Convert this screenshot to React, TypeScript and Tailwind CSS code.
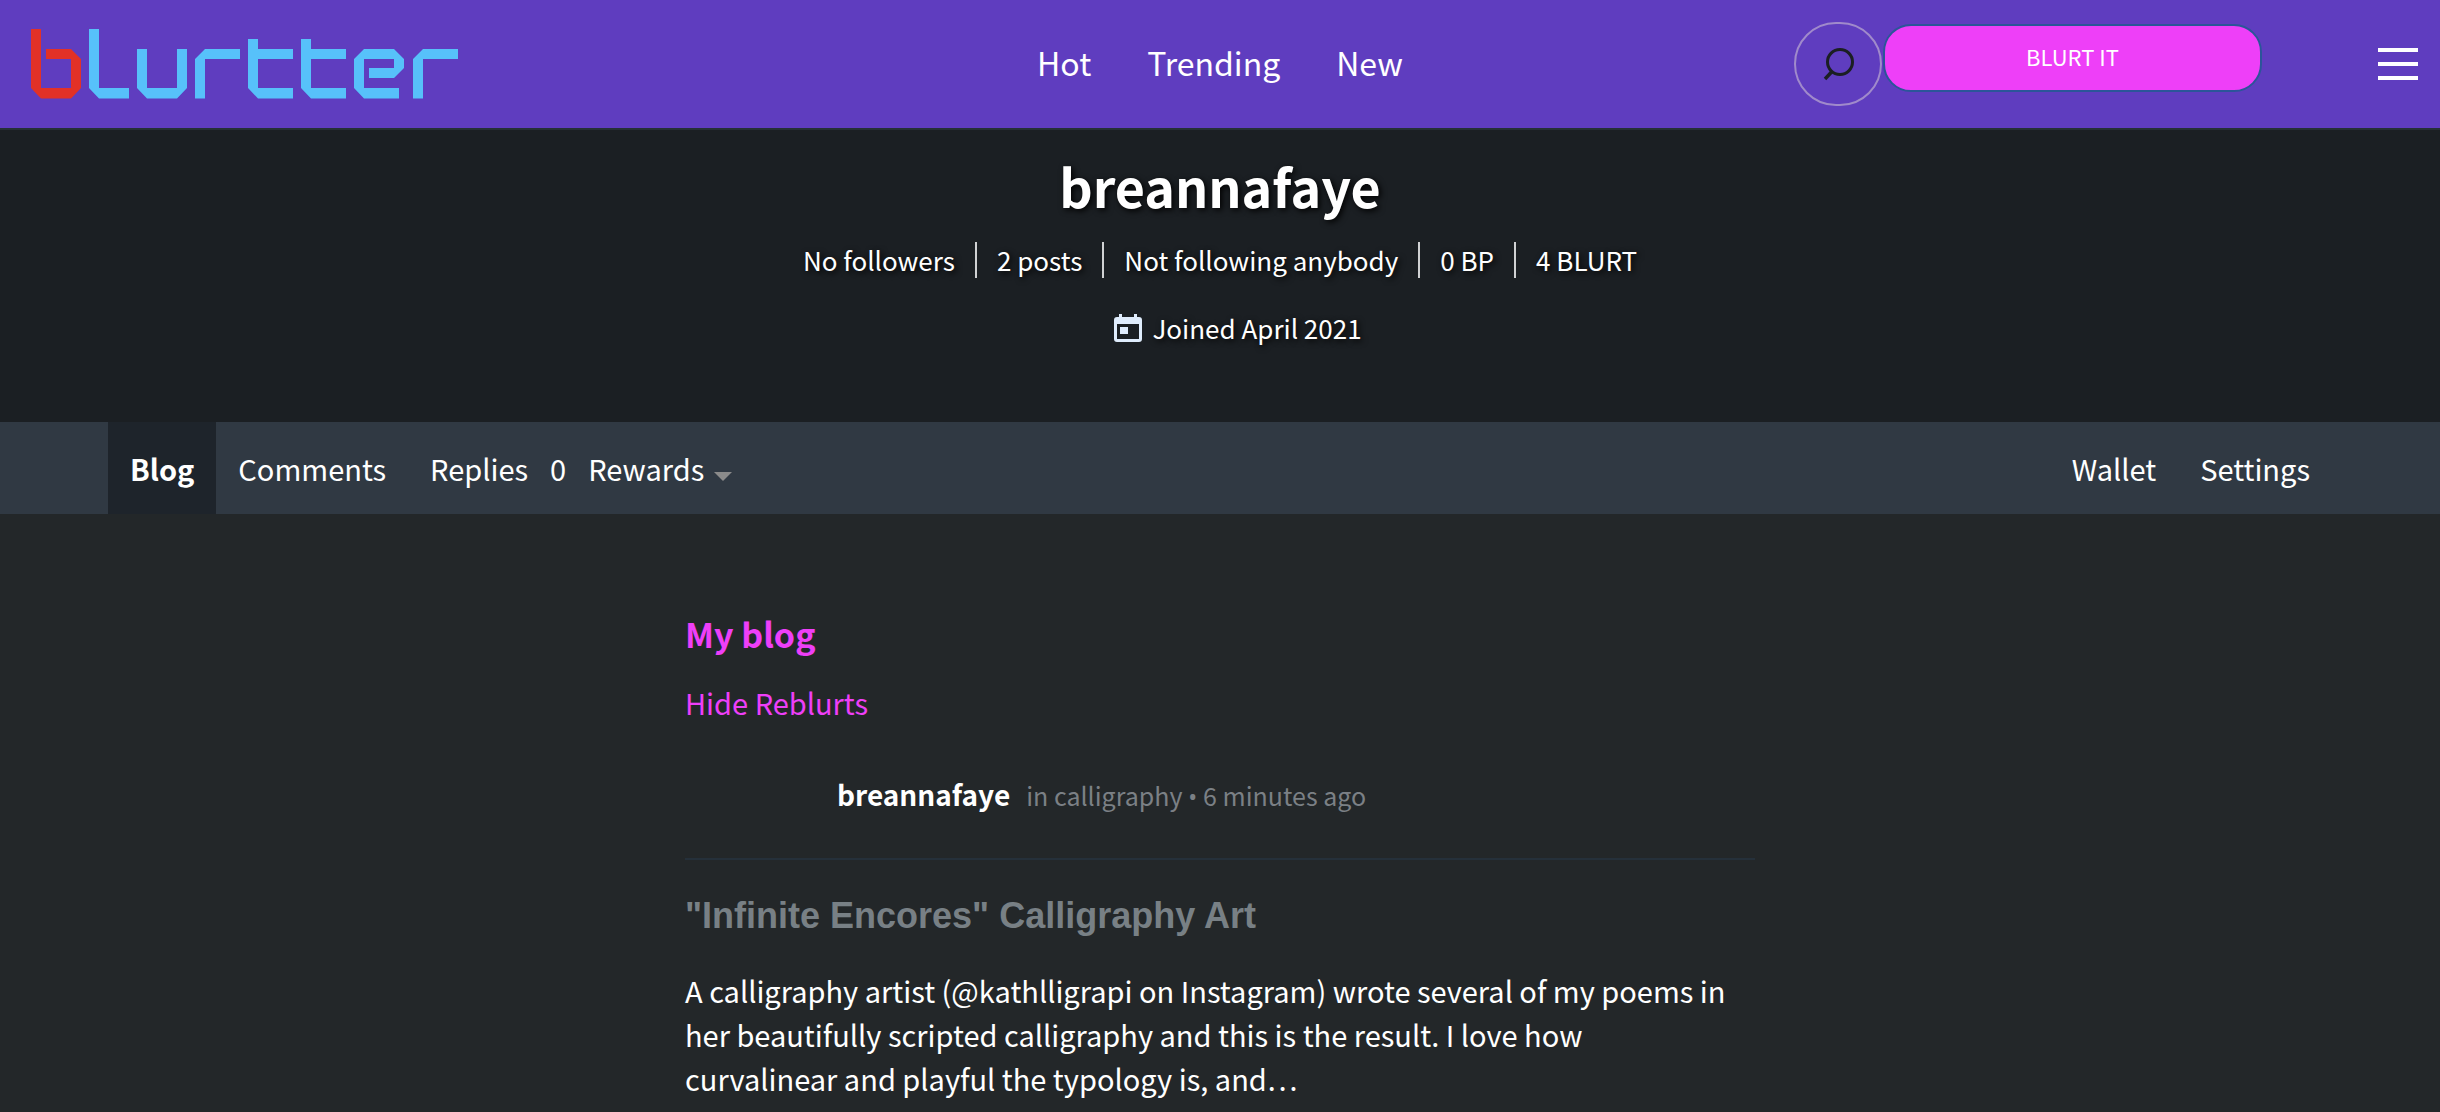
import React from "react";

function Logo() {
  return (
    <svg width="427" height="70" viewBox="31 29 427 70" role="img" aria-label="blurtter">
      <path fill="#e23127" d="M31 29H41V88H71V59H46V49H71L81 59V88L71 98.500H41L31 88Z" />
      <g fill="#57c1fa">
        <path d="M89 29H99V88H129V98.500H99L89 88Z" />
        <path d="M137 49H147V88H177V49H187V88L177 98.500H147L137 88Z" />
        <path d="M195 98.500V59L205 49H240V59H205V98.500Z" />
        <path d="M248 39H258V49H293V59H258V88H293V98.500H258L248 88Z" />
        <path d="M301 39H311V49H346V59H311V88H346V98.500H311L301 88Z" />
        <path d="M354 59L364 49H394L404 59V68L394 78H369V68H394V59H364V88H399V98.500H364L354 88Z" />
        <path d="M413 98.500V59L423 49H458V59H423V98.500Z" />
      </g>
    </svg>
  );
}

function SearchIcon() {
  return (
    <svg width="32" height="34" viewBox="0 0 32 34" fill="none" stroke="#1b1f23" strokeWidth="3" aria-hidden="true">
      <circle cx="18" cy="15" r="12.500" />
      <path d="M10 24.500L3 32" strokeWidth="3.500" />
    </svg>
  );
}

function CalendarIcon() {
  return (
    <svg width="28" height="28" viewBox="0 0 28 28" fill="#dfecfc" aria-hidden="true">
      <path
        fillRule="evenodd"
        d="M5 0H8V3H20V0H23V3H25Q28 3 28 6V25Q28 28 25 28H3Q0 28 0 25V6Q0 3 3 3H5ZM3 10V25H25V10Z"
      />
      <rect x="6" y="13" width="8" height="7" />
    </svg>
  );
}

const stats = ["No followers", "2 posts", "Not following anybody", "0 BP", "4 BLURT"];

export default function App() {
  return (
    <div className="min-h-screen bg-[#232729] font-['Noto_Sans_CJK_SC',sans-serif] text-white">
      <header className="grid h-[130px] grid-cols-[1fr_auto_1fr] items-center border-b-2 border-[#253036] bg-[#5f3dbf] px-[22px]">
        <a href="#home" className="pl-[9px]">
          <Logo />
        </a>
        <nav className="flex gap-14 pb-1 text-[32px] leading-10">
          <a href="#hot">Hot</a>
          <a href="#trending">Trending</a>
          <a href="#new">New</a>
        </nav>
        <div className="flex items-center justify-end">
          <button
            aria-label="Search"
            className="flex h-[84px] w-[88px] items-center justify-center rounded-full border-2 border-[#a08acb]"
          >
            <SearchIcon />
          </button>
          <button className="mb-3 ml-px h-[68px] w-[379px] rounded-[28px] border-2 border-[#2b5599] bg-[#ee3ff8] pb-1 text-[22px] leading-8">
            BLURT IT
          </button>
          <button aria-label="Menu" className="ml-[116px] flex w-10 flex-col gap-2.5">
            <span className="h-1 w-full bg-white" />
            <span className="h-1 w-full bg-white" />
            <span className="h-1 w-full bg-white" />
          </button>
        </div>
      </header>

      <section className="flex flex-col items-center bg-[#1b1f23] pt-6 pb-[76px] [text-shadow:2px_2px_6px_#000]">
        <h1 className="text-[52px] leading-[64px] font-bold">breannafaye</h1>
        <ul className="mt-6 flex text-[26px] leading-9">
          {stats.map((s) => (
            <li key={s} className="border-[#d0d2d3] px-5 not-first:border-l-2">
              {s}
            </li>
          ))}
        </ul>
        <p className="mt-8 flex items-center gap-2.5 pl-9 text-[26px] leading-9">
          <CalendarIcon />
          Joined April 2021
        </p>
      </section>

      <div className="flex h-[92px] items-stretch justify-between bg-[#303943] px-[108px] text-[29px] leading-10">
        <nav className="flex items-center">
          <a href="#blog" className="flex h-full items-center bg-[#1e242b] px-[22px] font-bold">
            Blog
          </a>
          <a href="#comments" className="px-[22px]">Comments</a>
          <a href="#replies" className="px-[22px]">Replies</a>
          <span>0</span>
          <button className="flex items-center gap-2.5 pl-[22px]">
            Rewards
            <svg width="18" height="9" viewBox="0 0 18 9" className="mt-4" fill="#8b8b8b" aria-hidden="true">
              <path d="M0 0H18L9 9Z" />
            </svg>
          </button>
        </nav>
        <nav className="flex items-center">
          <a href="#wallet" className="px-[22px]">Wallet</a>
          <a href="#settings" className="px-[22px]">Settings</a>
        </nav>
      </div>

      <main className="mx-auto w-full max-w-[1070px] pt-24">
        <h2 className="text-[34px] leading-[48px] font-bold text-[#ee3ff8]">My blog</h2>
        <a href="#hide" className="mt-6 block text-[29px] leading-10 text-[#ee3ff8]">
          Hide Reblurts
        </a>
        <article>
          <div className="mt-[52px] flex items-baseline gap-4 border-b-2 border-[#25303a] pb-[42px] pl-[152px] leading-10">
            <a href="#author" className="text-[28px] font-bold">breannafaye</a>
            <span className="text-[25px] text-[#7b8085]">
              in <a href="#calligraphy">calligraphy</a>{" "}
              <span className="font-['Open_Sans',sans-serif]">•</span> 6 minutes ago
            </span>
          </div>
          <h3 className="mt-8 font-['Liberation_Sans',sans-serif] text-4xl leading-[48px] font-bold text-[#788085]">
            "Infinite Encores" Calligraphy Art
          </h3>
          <p className="mt-7 max-w-[1050px] text-[29px] leading-[44px]">
            A calligraphy artist (@kathlligrapi on Instagram) wrote several of my poems in her beautifully scripted
            calligraphy and this is the result. I love how curvalinear and playful the typology is, and…
          </p>
        </article>
      </main>
    </div>
  );
}
